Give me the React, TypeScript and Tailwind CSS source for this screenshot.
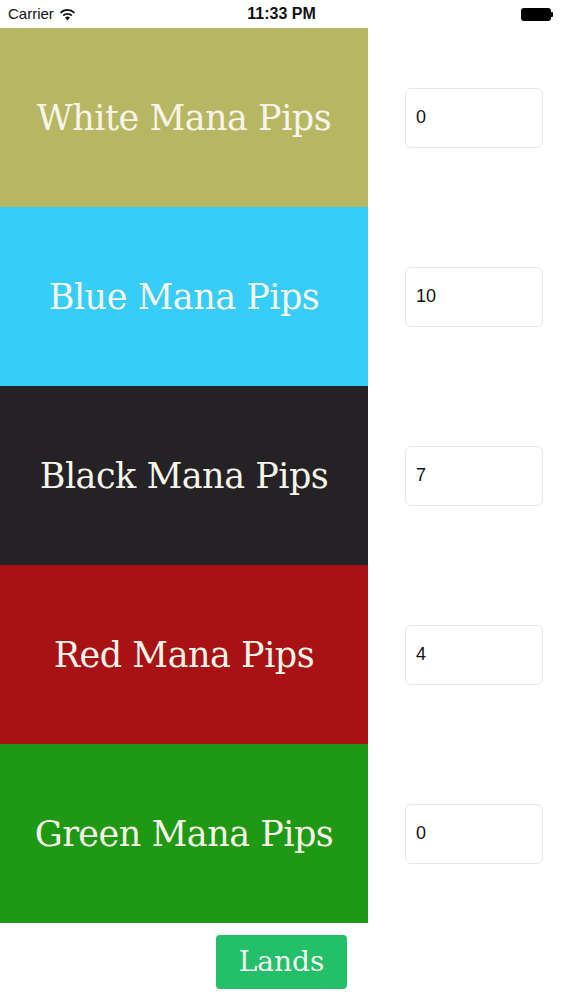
import React from "react";

const rows = [
  { label: "White Mana Pips", bg: "bg-[#b7b763]", value: "0" },
  { label: "Blue Mana Pips", bg: "bg-[#36cdf8]", value: "10" },
  { label: "Black Mana Pips", bg: "bg-[#242225]", value: "7" },
  { label: "Red Mana Pips", bg: "bg-[#a81215]", value: "4" },
  { label: "Green Mana Pips", bg: "bg-[#1f9813]", value: "0" },
];

function Wifi() {
  return (
    <svg width="17" height="13" viewBox="0 0 17 13" className="ml-[5px]">
      <path d="M8.5 12.5 L6 9.6 A3.6 3.6 0 0 1 11 9.6 Z" fill="#111" />
      <path d="M4.2 7.6 A6.2 6.2 0 0 1 12.8 7.6" stroke="#111" strokeWidth="1.8" fill="none" />
      <path d="M1.6 4.8 A9.8 9.8 0 0 1 15.4 4.8" stroke="#111" strokeWidth="1.8" fill="none" />
    </svg>
  );
}

const serif = { fontFamily: "'DejaVu Serif', 'Liberation Serif', serif" };

export default function App() {
  return (
    <div className="w-[563px] h-[1000px] bg-white flex flex-col" style={{ fontFamily: "'Liberation Sans', Arial, sans-serif" }}>
      <div className="h-[28px] flex items-center px-[8px] text-[15px] text-[#111]">
        <div className="flex-1 flex items-center">
          <span>Carrier</span>
          <Wifi />
        </div>
        <div className="font-bold text-[16px] pl-[2px]">11:33 PM</div>
        <div className="flex-1 flex items-center justify-end pr-[2px]">
          <div className="w-[30px] h-[13px] rounded-[3px] bg-black" />
          <div className="w-[2px] h-[5px] bg-black rounded-r-[1px]" />
        </div>
      </div>
      {rows.map((r) => (
        <div key={r.label} className="flex h-[179px]">
          <div className={`${r.bg} w-[368px] flex items-center justify-center`}>
            <span
              className="text-[#f7f5ea] text-[35px] leading-none tracking-[-0.5px] pt-[2px]"
              style={serif}
            >
              {r.label}
            </span>
          </div>
          <div className="flex-1 flex items-center">
            <div className="ml-[37px] w-[138px] h-[60px] border border-[#e6e6e6] rounded-[6px] flex items-center pl-[10px] text-[18px] text-[#111]">
              {r.value}
            </div>
          </div>
        </div>
      ))}
      <div className="flex justify-center pt-[12px]">
        <div className="w-[131px] h-[54px] rounded-[4px] bg-[#23bf69] flex items-center justify-center text-[#f3fbf4] text-[28px]" style={serif}>
          Lands
        </div>
      </div>
    </div>
  );
}
